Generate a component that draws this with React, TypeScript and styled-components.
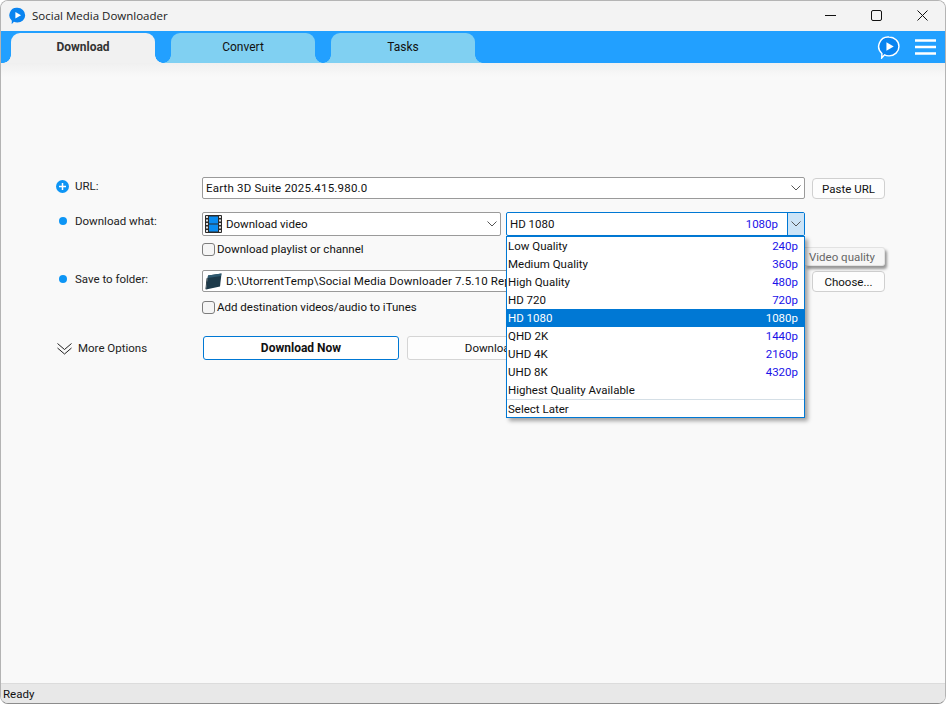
import React from "react";
import styled, { createGlobalStyle } from "styled-components";

const Global = createGlobalStyle`
  html, body { margin: 0; padding: 0; background: #fff; }
  body { font-family: Roboto, "Noto Sans", sans-serif; font-size: 11.5px; line-height: 14px; color: #111; }
`;

const Window = styled.div`
  width: 946px; height: 704px; box-sizing: border-box;
  display: flex; flex-direction: column;
  border: 1px solid #b4b4b4; border-bottom-color: #8c8c8c; border-radius: 8px; overflow: hidden;
  background: #f9f9f9;
`;
const TitleBar = styled.div`
  height: 30px; display: flex; align-items: center; background: #f3f3f3; padding-left: 7px; flex: none;
`;
const TitleText = styled.span`
  margin-left: 6px; font-family: "Open Sans", sans-serif; font-size: 11.5px; color: #1a1a1a; padding-bottom: 1px;
`;
const WindowControls = styled.div`
  margin-left: auto; display: flex; align-items: center; height: 100%;
`;
const WindowButton = styled.div`
  width: 46px; height: 100%; display: flex; align-items: center; justify-content: center; padding-bottom: 1px; box-sizing: border-box;
  svg { display: block; }
`;
const TabBar = styled.div`
  height: 32px; background: #22a0ff; display: flex; align-items: flex-end;
  padding: 0 9px 0 10px; flex: none;
`;
const Tab = styled.div<{ $active?: boolean }>`
  --tab: ${p => (p.$active ? "#f1f1f1" : "#80d0f2")};
  position: relative; width: 144px; height: 30px; margin-right: 16px; box-sizing: border-box; padding-bottom: 2px;
  background: var(--tab); border-radius: 9px 9px 0 0;
  display: flex; align-items: center; justify-content: center;
  font-weight: ${p => (p.$active ? 700 : 400)}; color: ${p => (p.$active ? "#333" : "#111")};
  font-size: 12px;
  &::before, &::after { content: ""; position: absolute; bottom: 0; width: 8px; height: 8px; }
  &::before { left: -8px; background: radial-gradient(circle at 0 0, transparent 7.5px, var(--tab) 8px); }
  &::after { right: -8px; background: radial-gradient(circle at 100% 0, transparent 7.5px, var(--tab) 8px); }
`;
const TabActions = styled.div`
  margin-left: auto; align-self: center; display: flex; align-items: center; gap: 15px;
  svg { display: block; }
`;
const Main = styled.main`
  flex: 1; min-height: 0;
  background: linear-gradient(#f0f0f0 0, #f9f9f9 14px);
  padding: 114px 60px 0 55px;
`;
const Row = styled.div<{ $top: number }>`
  display: grid; grid-template-columns: 146px 603px 80px;
  margin-top: ${p => p.$top}px; align-items: start;
`;
const Label = styled.div`
  display: flex; align-items: center; height: 18px; color: #222;
`;
const Bullet = styled.span`
  width: 8px; height: 8px; border-radius: 50%; background: #0d95f5; margin: 0 8px 0 3px; flex: none;
`;
const PlusIcon = styled.span`
  width: 13px; height: 13px; margin-right: 6px; flex: none; display: block;
  svg { display: block; }
`;
const Fields = styled.div`
  display: flex; gap: 5px;
`;
const ComboBox = styled.div<{ $w?: number; $h: number; $focus?: boolean }>`
  box-sizing: border-box; width: ${p => (p.$w ? `${p.$w}px` : "100%")}; height: ${p => p.$h}px;
  display: flex; align-items: center; background: #fff; overflow: hidden; white-space: nowrap;
  border: 1px solid ${p => (p.$focus ? "#0078d4" : "#9a9a9a")}; border-radius: 2px;
  padding-left: 2px; flex: none;
`;
const ComboText = styled.span<{ $spacing?: number; $inset?: number }>`
  flex: 1; min-width: 0; overflow: hidden; padding-left: ${p => p.$inset ?? 0}px;
  letter-spacing: ${p => p.$spacing ?? 0}px;
`;
const Arrow = styled.span<{ $open?: boolean }>`
  width: 17px; align-self: stretch; display: flex; align-items: center; justify-content: center; flex: none;
  background: ${p => (p.$open ? "#cce4f7" : "transparent")};
  border-left: ${p => (p.$open ? "1px solid #0078d4" : "0")};
  box-sizing: border-box;
`;
const Quality = styled.div`
  position: relative; width: 299px; flex: none;
`;
const SideButton = styled.button`
  box-sizing: border-box; margin: 1px 0 0 7px; width: 73px; height: 21px;
  background: #fdfdfd; border: 1px solid #d0d0d0; border-radius: 4px; padding: 0;
  font: inherit; color: #111;
`;
const Resolution = styled.span<{ $light?: boolean }>`
  color: ${p => (p.$light ? "#fff" : "#1a12e8")};
`;
const QualityValue = styled(Resolution)`
  margin-right: 9px;
`;
const Menu = styled.div`
  position: absolute; top: 100%; left: 0; right: 0; z-index: 3; box-sizing: border-box;
  background: #fff; border: 1px solid #0078d4; height: 182px;
  box-shadow: 3px 3px 4px rgba(0, 0, 0, 0.35);
`;
const MenuItem = styled.div<{ $selected?: boolean; $divider?: boolean }>`
  height: 18px; display: flex; justify-content: space-between; align-items: center;
  padding: 0 6px 0 1px; box-sizing: border-box;
  background: ${p => (p.$selected ? "#0078d4" : "transparent")};
  color: ${p => (p.$selected ? "#fff" : "#111")};
  border-top: ${p => (p.$divider ? "1px solid #d5dfe6" : "0")};
`;
const Tooltip = styled.div`
  position: absolute; left: 299px; top: 35px; z-index: 2; box-sizing: border-box;
  width: 80px; height: 19px; padding-left: 4px; display: flex; align-items: center;
  background: #f6f6f6; border: 1px solid #e2e2e2; border-left: 0; border-radius: 0 3px 3px 0; color: #666;
  box-shadow: 2px 3px 3px rgba(0, 0, 0, 0.4); white-space: nowrap;
`;
const CheckRow = styled.label`
  display: flex; align-items: center; height: 14px; gap: 2px; white-space: nowrap;
`;
const Box = styled.span`
  box-sizing: border-box; width: 13px; height: 13px; border: 1px solid #7d7d7d; border-radius: 3px; background: #f5f5f5;
`;
const MoreLabel = styled.div`
  display: flex; align-items: center; height: 24px; color: #222;
  svg { display: block; margin: 0 6px 0 1px; }
`;
const Actions = styled.div`
  display: flex; gap: 8px; padding-left: 1px;
`;
const PrimaryButton = styled.button`
  box-sizing: border-box; width: 196px; height: 24px; background: #fff; border: 1px solid #0078d4; border-radius: 3px;
  padding: 0; font: inherit; font-weight: 700; color: #111; font-size: 12px;
`;
const SecondaryButton = styled.button`
  box-sizing: border-box; width: 196px; height: 24px; background: #fdfdfd; border: 1px solid #d5d5d5; border-radius: 3px;
  padding: 0; font: inherit; color: #111;
`;
const StatusBar = styled.footer`
  height: 20px; flex: none; background: #e8e8e8; border-top: 1px solid #dcdcdc; box-sizing: border-box;
  display: flex; align-items: center; padding-left: 2px; color: #111;
`;

const Chevron = () => (
  <svg width="10" height="6" viewBox="0 0 10 6"><path d="M.5.5 5 5 9.5.5" fill="none" stroke="#555" strokeWidth="1" /></svg>
);
const Bubble = ({ size, fill, ring, tri }: { size: number; fill: string; ring?: string; tri: string }) => (
  <svg width={size} height={size} viewBox="0 0 22 22">
    <path d="M11.500 1a9.500 9 0 0 1 0 18c-1.600 0-3-.3-4.300-1L4.500 21l.2-4.300A9 9 0 0 1 11.500 1z" fill={fill} stroke={ring ?? "none"} strokeWidth={ring ? 1.4 : 0} />
    <path d="M9 6l7 4-7 4z" fill={tri} />
  </svg>
);
const FilmIcon = () => (
  <svg width="17" height="18" viewBox="0 0 17 18">
    <rect x="0" y="0" width="17" height="18" rx="1" fill="#2b2b2b" />
    <rect x="4" y="1.500" width="9" height="7" fill="#0a8cf0" />
    <rect x="4" y="9.500" width="9" height="7" fill="#0a8cf0" />
    {[1, 4.500, 8, 11.500, 15].map(y => (
      <React.Fragment key={y}>
        <rect x="1" y={y} width="2" height="2" fill="#ddd" />
        <rect x="14" y={y} width="2" height="2" fill="#ddd" />
      </React.Fragment>
    ))}
  </svg>
);
const FolderIcon = () => (
  <svg width="17" height="17" viewBox="0 0 17 17">
    <path d="M3 2.500 16.500.5 15 13.500 1 16.500z" fill="#1d3a4a" />
    <path d="M3 2.500 16.500.5 16 3 2.700 5z" fill="#2f5a70" />
    <path d="M1 16.500 2.700 5 1.600 5.300.5 16z" fill="#10242e" />
  </svg>
);

const qualities: [string, string][] = [
  ["Low Quality", "240p"],
  ["Medium Quality", "360p"],
  ["High Quality", "480p"],
  ["HD 720", "720p"],
  ["HD 1080", "1080p"],
  ["QHD 2K", "1440p"],
  ["UHD 4K", "2160p"],
  ["UHD 8K", "4320p"],
  ["Highest Quality Available", ""],
];

export default function App() {
  return (
    <Window>
      <Global />
      <TitleBar>
        <Bubble size={18} fill="#0a84f0" tri="#fff" />
        <TitleText>Social Media Downloader</TitleText>
        <WindowControls>
          <WindowButton>
            <svg width="11" height="11" viewBox="0 0 11 11"><path d="M0 5.500h11" stroke="#111" /></svg>
          </WindowButton>
          <WindowButton>
            <svg width="11" height="11" viewBox="0 0 11 11"><rect x=".5" y=".5" width="10" height="10" rx="1.500" fill="none" stroke="#111" /></svg>
          </WindowButton>
          <WindowButton>
            <svg width="11" height="11" viewBox="0 0 11 11"><path d="M.5.500l10 10M10.500.500l-10 10" stroke="#111" /></svg>
          </WindowButton>
        </WindowControls>
      </TitleBar>
      <TabBar>
        <Tab $active>Download</Tab>
        <Tab>Convert</Tab>
        <Tab>Tasks</Tab>
        <TabActions>
          <Bubble size={23} fill="#0a84f0" ring="#fff" tri="#fff" />
          <svg width="21" height="18" viewBox="0 0 21 18"><path d="M0 2.500h21M0 9h21M0 15.500h21" stroke="#fff" strokeWidth="2.400" /></svg>
        </TabActions>
      </TabBar>
      <Main>
        <Row $top={0}>
          <Label>
            <PlusIcon>
              <svg width="13" height="13" viewBox="0 0 13 13"><circle cx="6.500" cy="6.500" r="6.500" fill="#0d95f5" /><path d="M6.500 3v7M3 6.500h7" stroke="#fff" strokeWidth="1.500" /></svg>
            </PlusIcon>
            URL:
          </Label>
          <ComboBox $h={22}>
            <ComboText $inset={1} $spacing={0.2}>Earth 3D Suite 2025.415.980.0</ComboText>
            <Arrow><Chevron /></Arrow>
          </ComboBox>
          <SideButton>Paste URL</SideButton>
        </Row>
        <Row $top={13}>
          <Label><Bullet />Download what:</Label>
          <Fields>
            <ComboBox $w={299} $h={24}>
              <FilmIcon />
              <ComboText $inset={4}>Download video</ComboText>
              <Arrow><Chevron /></Arrow>
            </ComboBox>
            <Quality>
              <ComboBox $h={24} $focus>
                <ComboText $inset={1}>HD 1080</ComboText>
                <QualityValue>1080p</QualityValue>
                <Arrow $open><Chevron /></Arrow>
              </ComboBox>
              <Menu>
                {qualities.map(([name, res]) => {
                  const selected = name === "HD 1080";
                  return (
                    <MenuItem key={name} $selected={selected}>
                      <span>{name}</span>
                      <Resolution $light={selected}>{res}</Resolution>
                    </MenuItem>
                  );
                })}
                <MenuItem $divider>Select Later</MenuItem>
              </Menu>
              <Tooltip>Video quality</Tooltip>
            </Quality>
          </Fields>
        </Row>
        <Row $top={6}>
          <span />
          <CheckRow><Box />Download playlist or channel</CheckRow>
        </Row>
        <Row $top={14}>
          <Label><Bullet />Save to folder:</Label>
          <ComboBox $h={22}>
            <FolderIcon />
            <ComboText $inset={4} $spacing={0.15}>D:\UtorrentTemp\Social Media Downloader 7.5.10 Repack\</ComboText>
          </ComboBox>
          <SideButton>Choose...</SideButton>
        </Row>
        <Row $top={8}>
          <span />
          <CheckRow><Box />Add destination videos/audio to iTunes</CheckRow>
        </Row>
        <Row $top={22}>
          <MoreLabel>
            <svg width="15" height="15" viewBox="0 0 15 15"><path d="M.5 2.500 7.500 8.500 14.500 2.500M.5 7 7.500 13 14.500 7" fill="none" stroke="#222" /></svg>
            More Options
          </MoreLabel>
          <Actions>
            <PrimaryButton>Download Now</PrimaryButton>
            <SecondaryButton>Download Later</SecondaryButton>
          </Actions>
        </Row>
      </Main>
      <StatusBar>Ready</StatusBar>
    </Window>
  );
}
